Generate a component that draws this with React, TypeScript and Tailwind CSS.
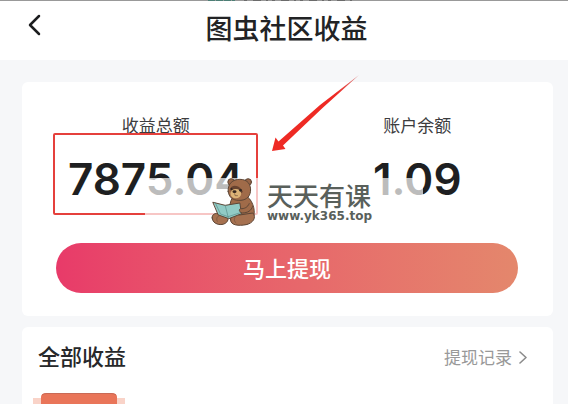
import React from 'react';

const cjk = "font-['Noto_Sans_CJK_SC',sans-serif]";

interface AmountProps {
    label: string;
    value: string;
    marked?: boolean;
}

const Amount: React.FC<AmountProps> = ({ label, value, marked }) => {
    return (
        <div className="relative flex flex-col items-center">
            <div className="text-[17px] leading-6 text-[#3c3c3e]">{label}</div>
            <div className="mt-4 font-['Inter',sans-serif] text-[44px] leading-[52px] font-semibold text-[#1e1f21]">{value}</div>
            {marked && (
                <div className="absolute top-5 right-[29px] left-7 h-[82px] rounded-xs border-2 border-[#e5403c]" />
            )}
        </div>
    );
};

const Arrow: React.FC = () => {
    return (
        <svg className="absolute -top-2 left-[248px]" width="92" height="80" viewBox="0 0 92 80" aria-hidden="true">
            <defs>
                <linearGradient id="arrow" x1="0" y1="1" x2="1" y2="0">
                    <stop offset="0.75" stopColor="#ee2a24" />
                    <stop offset="1" stopColor="#d98080" />
                </linearGradient>
            </defs>
            <path d="M2 77 L5.5 63.5 L8.5 67.5 L50 31 L89 1 L52.5 34 L13 71.5 L15.5 75 Z" fill="url(#arrow)" />
        </svg>
    );
};

const Bear: React.FC = () => {
    return (
        <svg width="47" height="50" viewBox="30 35 140 150" aria-hidden="true">
            <g stroke="#5d4636" strokeWidth="3" strokeLinejoin="round" strokeLinecap="round">
                <circle cx="93" cy="50" r="10" fill="#986547" />
                <circle cx="144" cy="50" r="10" fill="#986547" />
                <path d="M96 98 C84 120 84 160 100 172 L140 177 C162 165 167 142 158 118 C153 104 145 96 138 92 Z" fill="#a06b49" />
                <path d="M84 78 C82 55 98 42 119 42 C143 42 153 58 151 78 C149 97 134 106 116 105 C98 105 86 96 84 78 Z" fill="#a06b49" />
                <path d="M36 158 C34 147 46 142 57 145 L84 158 C84 173 70 180 54 177 C43 174 37 168 36 158 Z" fill="#a67150" />
                <path d="M91 163 C91 151 106 145 118 149 L158 143 C170 156 158 174 138 178 C116 182 91 181 91 163 Z" fill="#a67150" />
                <path d="M39 111 L75 120 L119 113 L124 145 L86 160 L55 149 Z" fill="#91cbc5" />
                <path d="M75 120 L85 159 M45 112 L61 146 L84 154 L121 142" fill="none" stroke="#588c88" strokeWidth="2" />
                <path d="M147 115 C143 126 132 131 121 130 C115 132 117 141 126 143 C143 143 154 135 157 124" fill="#a06b49" />
            </g>
            <path d="M90 70 C95 58 113 59 124 72 L128 80 L119 86 L93 82 Z" fill="#68432f" />
            <ellipse cx="107" cy="85" rx="16" ry="14" fill="#dcb377" />
            <ellipse cx="103" cy="79" rx="6" ry="4" fill="#38271f" />
            <circle cx="94" cy="71" r="3" fill="#302823" />
            <circle cx="121" cy="75" r="4" fill="#302823" />
            <path d="M103 84 L105 91 L113 91" fill="none" stroke="#725039" strokeWidth="2" />
            <path d="M58 151 C51 152 47 161 52 169 M107 153 C101 158 101 168 108 173" fill="none" stroke="#714e3c" strokeWidth="2" />
        </svg>
    );
};

const Watermark: React.FC = () => {
    return (
        <div className="absolute top-24 left-[123px] flex h-[54px] w-[278px] bg-white/70 pl-[65px]">
            <div className="-mt-px shrink-0">
                <Bear />
            </div>
            <div className="ml-2.5 pt-[3px] text-[#59605b]">
                <div className="text-[26px] leading-7 font-medium whitespace-nowrap">天天有课</div>
                <div className="font-['DejaVu_Sans',sans-serif] text-[12px] leading-[14px] font-bold">www.yk365.top</div>
            </div>
        </div>
    );
};

const App: React.FC = () => {
    return (
        <div className={`flex min-h-screen flex-col bg-[#f6f7f9] ${cjk}`}>
            <header className="relative flex h-[60px] items-center justify-center border-t border-[#999999] bg-white pr-4 pb-1.5 pl-[21px]">
                <button type="button" aria-label="返回" className="absolute top-3 left-[26px]">
                    <svg width="18" height="24" viewBox="0 0 18 24" fill="none" stroke="#1c1d1f" strokeWidth="2.5" strokeLinecap="round" strokeLinejoin="round">
                        <path d="M13 3 L4 12 L13 21" />
                    </svg>
                </button>
                <svg className="absolute -top-px left-[208px]" width="148" height="1" viewBox="0 0 148 1" aria-hidden="true">
                    <path d="M0 .5 H27" stroke="#4d7f76" strokeDasharray="7 1" />
                    <path d="M36 .5 H148" stroke="#6b6b6b" strokeDasharray="3 6 8 5 2 4" />
                </svg>
                <h1 className="text-[27px] leading-9 font-medium text-[#222325]">图虫社区收益</h1>
            </header>

            <main className="flex flex-1 flex-col gap-[11px] pt-[22px] pr-[15px] pl-[22px]">
                <section className="relative rounded-md bg-white pt-[31px] pb-[23px]">
                    <div className="grid grid-cols-2 pr-[5px] pl-[3px]">
                        <Amount label="收益总额" value="7875.04" marked />
                        <Amount label="账户余额" value="1.09" />
                    </div>
                    <div className="mt-[38px] pr-[35px] pl-[34px]">
                        <button type="button" className="h-[50px] w-full rounded-full bg-linear-to-r from-[#e83a69] to-[#e4876c] pb-0.5 text-[22px] font-medium text-white">
                            马上提现
                        </button>
                    </div>
                    <Watermark />
                    <Arrow />
                </section>

                <section className="flex flex-1 flex-col justify-between rounded-t-md bg-white">
                    <div className="flex items-start justify-between pt-3 pr-[25px] pl-4">
                        <h2 className="text-[22px] leading-8 font-medium text-[#27282a]">全部收益</h2>
                        <a href="#records" className="flex items-center gap-1.5 pt-1.5 text-[17px] leading-6 text-[#999999]">
                            提现记录
                            <svg width="10" height="14" viewBox="0 0 10 14" fill="none" stroke="#8c8c8c" strokeWidth="1.6" strokeLinecap="round" strokeLinejoin="round">
                                <path d="M2 2 L8 7.5 L2 13" />
                            </svg>
                        </a>
                    </div>
                    <svg className="ml-[11px]" width="92" height="11" viewBox="0 0 92 11" aria-hidden="true">
                        <path d="M0 11 V5 H92 V11 Z" fill="#f9d3c8" />
                        <path d="M8 11 V4 Q8 0 14 0 H78 Q84 0 84 4 V11 Z" fill="#e97559" />
                        <path d="M9 2 Q11 .5 14 .5 H78 Q81 .5 83 2" fill="none" stroke="#c96a56" />
                    </svg>
                </section>
            </main>
        </div>
    );
};

export default App;
